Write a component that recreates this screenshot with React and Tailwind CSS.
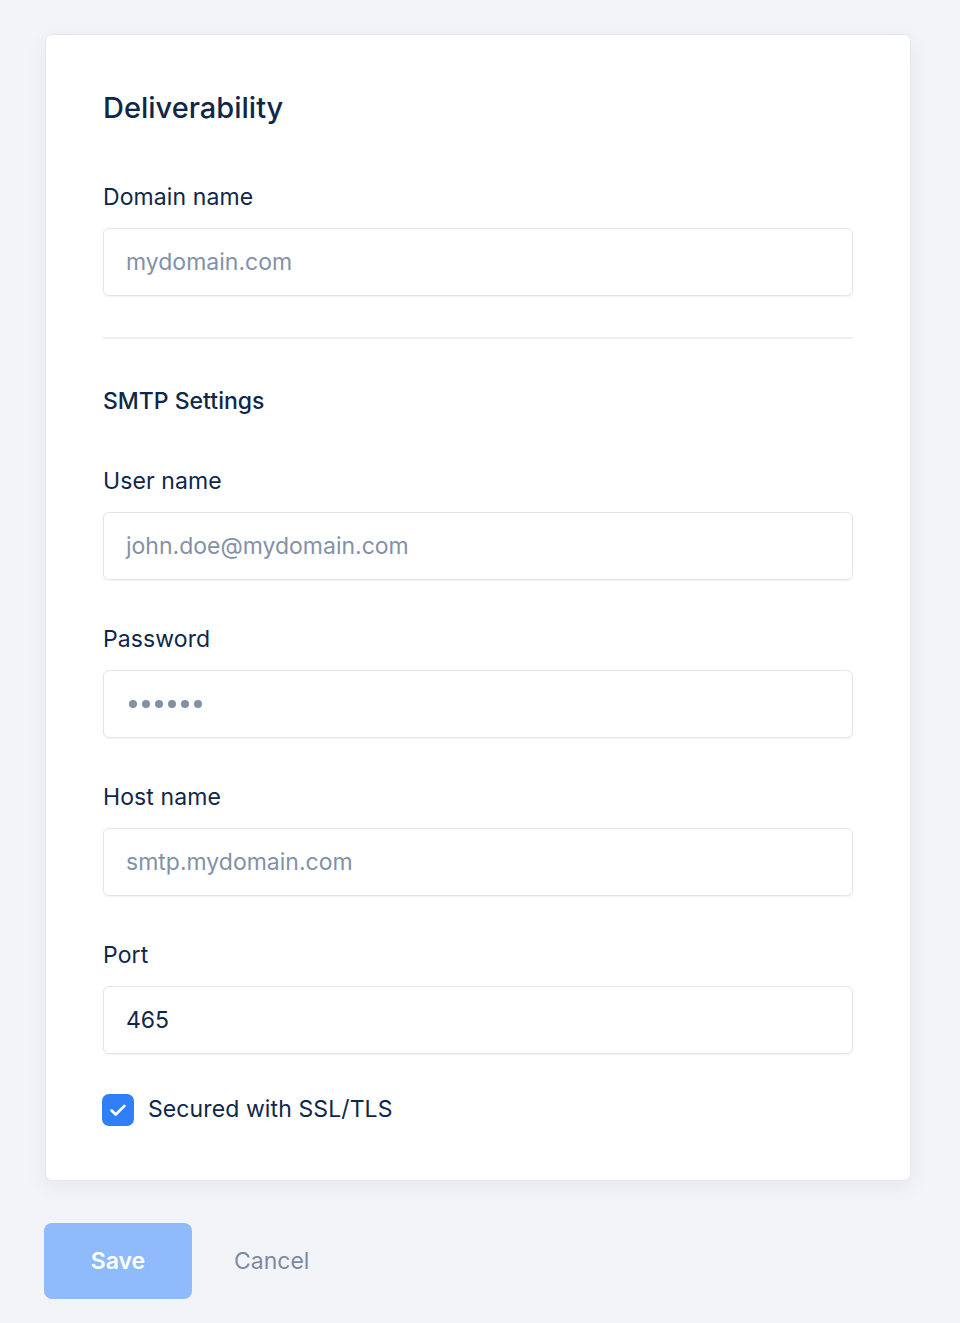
import React from "react";

const font = { fontFamily: "Inter, 'Noto Sans', sans-serif" };

function Field({ label, placeholder, value, dots }) {
  return (
    <div className="flex flex-col">
      <label className="text-[23px] leading-[33px] tracking-[0.1px] text-[#0f2749]">{label}</label>
      <div className="mt-[14px] h-[68px] rounded-[6px] border border-[#e1e5ec] bg-white shadow-[0_1px_2px_rgba(15,39,73,0.06)] flex items-center px-[22px]">
        {dots ? (
          <div className="flex gap-[5px] pl-[3px]">
            {[0, 1, 2, 3, 4, 5].map((i) => (
              <span key={i} className="w-[8px] h-[8px] rounded-full bg-[#8391a7]" />
            ))}
          </div>
        ) : value ? (
          <span className="text-[23px] text-[#0f2749]">{value}</span>
        ) : (
          <span className="text-[23px] text-[#8391a7]">{placeholder}</span>
        )}
      </div>
    </div>
  );
}

export default function App() {
  return (
    <div style={font} className="min-h-[1323px] bg-[#f3f4f8] pt-[34px] pb-[24px]">
      <div className="ml-[45px] w-[866px] rounded-[7px] border border-[#e4e7ee] bg-white shadow-[0_6px_24px_rgba(15,39,73,0.06)] px-[57px] pt-[56px] pb-[54px]">
        <h1 className="text-[29px] leading-[34px] font-medium text-[#0f2749]">Deliverability</h1>
        <div className="mt-[56px]">
          <Field label="Domain name" placeholder="mydomain.com" />
        </div>
        <div className="mt-[41px] h-[2px] bg-[#eef0f4]" />
        <h2 className="mt-[46px] text-[23px] leading-[33px] font-medium text-[#0f2749]">SMTP Settings</h2>
        <div className="mt-[47px] flex flex-col gap-[43px]">
          <Field label="User name" placeholder="john.doe@mydomain.com" />
          <Field label="Password" dots />
          <Field label="Host name" placeholder="smtp.mydomain.com" />
          <Field label="Port" value="465" />
        </div>
        <div className="mt-[39px] flex items-center gap-[14px] -ml-[1px]">
          <div className="w-[32px] h-[32px] rounded-[7px] bg-[#2e7ff8] flex items-center justify-center">
            <svg width="22" height="22" viewBox="0 0 24 24" fill="none" stroke="white" strokeWidth="3" strokeLinecap="round" strokeLinejoin="round">
              <path d="M5 12.5l4.5 4.5L19 7.5" />
            </svg>
          </div>
          <span className="text-[23px] leading-[33px] tracking-[0.1px] text-[#0f2749]">Secured with SSL/TLS</span>
        </div>
      </div>
      <div className="mt-[42px] ml-[44px] flex items-center gap-[42px]">
        <button className="w-[148px] h-[76px] rounded-[8px] bg-[#8fbafb] text-white text-[23px] font-semibold">Save</button>
        <button className="text-[23px] text-[#7d8ba1]">Cancel</button>
      </div>
    </div>
  );
}
